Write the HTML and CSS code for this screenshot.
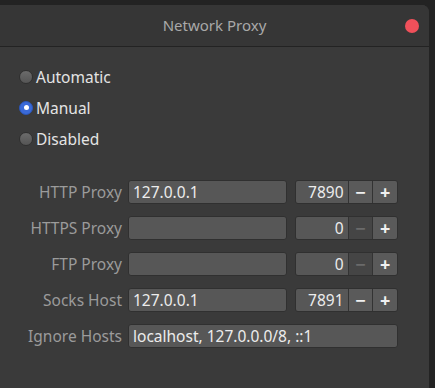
FILE: index.html
```html
<!DOCTYPE html>
<html lang="en">
<head>
    <meta charset="UTF-8">
    <title>Network Proxy</title>
    <link rel="stylesheet" href="styles.css">
</head>
<body>
<div class="window">
    <div class="titlebar">
        <span class="title">Network Proxy</span>
        <span class="close"></span>
    </div>
    <div class="content">
        <div class="modes">
            <label class="mode"><span class="radio"></span>Automatic</label>
            <label class="mode"><span class="radio checked"></span>Manual</label>
            <label class="mode"><span class="radio"></span>Disabled</label>
        </div>
        <div class="form">
            <span class="label">HTTP Proxy</span>
            <div class="entry">127.0.0.1</div>
            <div class="spin">
                <div class="spin-value">7890</div>
                <div class="spin-btn">&minus;</div>
                <div class="spin-btn">+</div>
            </div>

            <span class="label">HTTPS Proxy</span>
            <div class="entry"></div>
            <div class="spin">
                <div class="spin-value">0</div>
                <div class="spin-btn disabled">&minus;</div>
                <div class="spin-btn">+</div>
            </div>

            <span class="label">FTP Proxy</span>
            <div class="entry"></div>
            <div class="spin">
                <div class="spin-value">0</div>
                <div class="spin-btn disabled">&minus;</div>
                <div class="spin-btn">+</div>
            </div>

            <span class="label">Socks Host</span>
            <div class="entry">127.0.0.1</div>
            <div class="spin">
                <div class="spin-value">7891</div>
                <div class="spin-btn">&minus;</div>
                <div class="spin-btn">+</div>
            </div>

            <span class="label">Ignore Hosts</span>
            <div class="entry wide">localhost, 127.0.0.0/8, ::1</div>
        </div>
    </div>
</div>
</body>
</html>
```

FILE: styles.css
```css
* {
    margin: 0;
    padding: 0;
    box-sizing: border-box;
}

html, body {
    height: 100%;
}

body {
    background: #232323;
    font-family: "Noto Sans", "Open Sans", sans-serif;
    font-size: 14px;
    padding-top: 5px;
    overflow: hidden;
}

.window {
    width: 429px;
    height: 383px;
    background: #3a3a3a;
    border-top-right-radius: 7px;
    overflow: hidden;
}

.titlebar {
    height: 42px;
    background: #363636;
    border-bottom: 1px solid #232323;
    display: flex;
    align-items: center;
    justify-content: center;
    position: relative;
}

.title {
    color: #a9a9a9;
    font-size: 15px;
    margin-top: -2px;
}

.close {
    position: absolute;
    right: 10px;
    top: 14px;
    width: 14px;
    height: 14px;
    border-radius: 50%;
    background: #f0505a;
}

.content {
    padding-top: 14px;
}

.modes {
    display: flex;
    flex-direction: column;
    padding-left: 19px;
}

.mode {
    height: 31px;
    display: flex;
    align-items: center;
    color: #e4e4e4;
    font-size: 15.5px;
}

.radio {
    width: 14px;
    height: 14px;
    border-radius: 50%;
    margin-right: 3px;
    background: linear-gradient(#6b6b6b, #555);
    border: 1px solid #303030;
    display: flex;
    align-items: center;
    justify-content: center;
}

.radio.checked {
    background: #3a6ad8;
    border-color: #2a55b8;
}

.radio.checked::after {
    content: '';
    width: 5px;
    height: 5px;
    border-radius: 50%;
    background: #fff;
}

.form {
    margin-top: 26px;
    display: grid;
    grid-template-columns: 122px 159px 105px;
    column-gap: 6px;
    row-gap: 12px;
}

.form .spin {
    margin-left: 2px;
}

.label {
    height: 24px;
    display: flex;
    align-items: center;
    justify-content: flex-end;
    color: #9b9b9b;
    font-size: 15.5px;
}

.entry {
    height: 24px;
    background: #575757;
    border: 1px solid #303030;
    border-radius: 3px;
    color: #ececec;
    font-size: 15.5px;
    display: flex;
    align-items: center;
    padding-left: 4px;
    white-space: nowrap;
    overflow: hidden;
}

.entry.wide {
    grid-column: 2 / 4;
}

.spin {
    height: 24px;
    display: flex;
    border: 1px solid #303030;
    border-radius: 3px;
    overflow: hidden;
}

.spin-value {
    width: 52px;
    background: #575757;
    color: #ececec;
    font-size: 15.5px;
    display: flex;
    align-items: center;
    justify-content: flex-end;
    padding-right: 4px;
}

.spin-btn {
    width: 25px;
    background: #5a5a5a;
    border-left: 1px solid #333;
    color: #f0f0f0;
    font-size: 18px;
    font-weight: bold;
    display: flex;
    align-items: center;
    justify-content: center;
    line-height: 1;
}

.spin-btn.disabled {
    background: #454545;
    color: #6a6a6a;
}
```
